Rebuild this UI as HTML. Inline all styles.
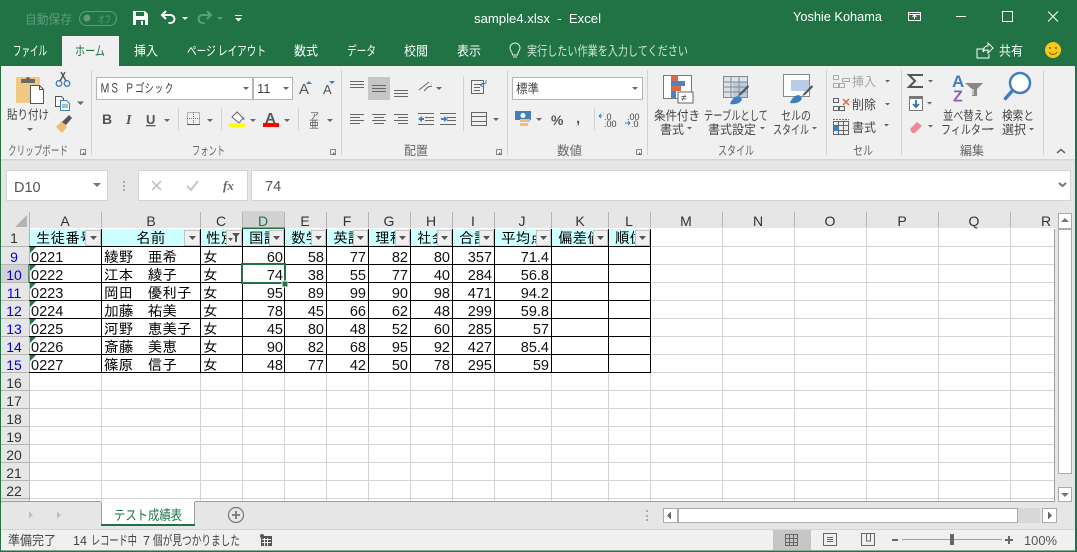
<!DOCTYPE html>
<html lang="ja"><head><meta charset="utf-8"><title>sample4.xlsx - Excel</title>
<style>
html,body{margin:0;padding:0;background:#e6e6e6;width:1077px;height:552px;overflow:hidden}
svg{display:block}
text{font-family:"Noto Sans CJK JP","Liberation Sans",sans-serif;font-size:12.5px;fill:#444}
.w text{fill:#fff}
.g text{font-family:"Liberation Sans","IPAGothic",sans-serif;font-size:14.5px;fill:#111}
.j text{font-family:"IPAGothic","Liberation Sans",sans-serif;font-size:14.6px;fill:#000}
.n text{text-anchor:end}
.h text{font-family:"Liberation Sans","IPAGothic",sans-serif;font-size:14px;fill:#333;text-anchor:middle}
.b text{fill:#0000e0}
.lb text{fill:#666;font-size:12.5px}
.t text{font-size:13px}
</style></head><body>
<svg width="1077" height="552" viewBox="0 0 1077 552" xmlns="http://www.w3.org/2000/svg">
<rect width="1077" height="552" fill="#e6e6e6"/>
<!-- title bar -->
<rect width="1077" height="66" fill="#217346"/>
<rect x="0" y="0" width="1" height="552" fill="#217346"/>
<rect x="1075" y="0" width="2" height="552" fill="#217346"/>
<text x="25" y="24" style="fill:#5f9c7d;font-size:13px" textLength="47" lengthAdjust="spacingAndGlyphs">自動保存</text>
<rect x="79.500" y="11.500" width="37" height="14" rx="7" fill="none" stroke="#5f9c7d"/>
<circle cx="87" cy="18" r="3.500" fill="#5f9c7d"/>
<text x="98" y="23" style="fill:#5f9c7d;font-size:10px" textLength="13" lengthAdjust="spacingAndGlyphs">オフ</text>
<path d="M133 11h12l3 3v11h-15z" fill="#fff"/><rect x="136" y="12" width="8" height="4" fill="#217346"/><rect x="136" y="20" width="9" height="5" fill="#217346"/><rect x="141" y="21" width="2" height="4" fill="#fff"/>
<path d="M166 11l-4 4 4 4M162.500 15h8a4 4 0 0 1 4 4 4 4 0 0 1-4 4h-2" fill="none" stroke="#fff" stroke-width="2"/>
<path d="M182 17h6l-3 3z" fill="#fff"/>
<path d="M207 11l4 4-4 4M210.500 15h-8a4 4 0 0 0-4 4 4 4 0 0 0 4 4h2" fill="none" stroke="#5f9c7d" stroke-width="2"/>
<path d="M217 17h6l-3 3z" fill="#5f9c7d"/>
<rect x="235" y="15" width="7" height="1" fill="#fff"/><path d="M235 18h7l-3.500 3.500z" fill="#fff"/>
<g class="w">
<text x="474" y="23" style="font-family:'Liberation Sans',sans-serif;font-size:13px;fill:#fff" textLength="127" lengthAdjust="spacingAndGlyphs" xml:space="preserve">sample4.xlsx  -  Excel</text>
<text x="793" y="21" style="font-family:'Liberation Sans',sans-serif;font-size:12.500px" textLength="89" lengthAdjust="spacingAndGlyphs">Yoshie Kohama</text>
</g>
<rect x="908.500" y="12.500" width="12" height="8" fill="none" stroke="#fff"/><path d="M908 14.500h13M914.500 19v-4M912.500 17l2-2 2 2" fill="none" stroke="#fff"/>
<rect x="956" y="16" width="10" height="1" fill="#fff"/>
<rect x="1002.500" y="11.500" width="10" height="10" fill="none" stroke="#fff"/>
<path d="M1048 11.500l10 10M1058 11.500l-10 10" stroke="#fff" fill="none" stroke-width="1"/>
<!-- tabs -->
<rect x="62" y="36" width="57" height="31" fill="#f0f0f0"/>
<g class="w t">
<text x="13" y="55.500" textLength="34" lengthAdjust="spacingAndGlyphs">ファイル</text>
<text x="134" y="55.500" textLength="24" lengthAdjust="spacingAndGlyphs">挿入</text>
<text x="187" y="55.500" textLength="79" lengthAdjust="spacingAndGlyphs">ページ レイアウト</text>
<text x="294" y="55.500" textLength="24" lengthAdjust="spacingAndGlyphs">数式</text>
<text x="347" y="55.500" textLength="29" lengthAdjust="spacingAndGlyphs">データ</text>
<text x="404" y="55.500" textLength="24" lengthAdjust="spacingAndGlyphs">校閲</text>
<text x="457" y="55.500" textLength="24" lengthAdjust="spacingAndGlyphs">表示</text>
<text x="999" y="55.500" textLength="24" lengthAdjust="spacingAndGlyphs">共有</text>
</g>
<text x="75" y="55.500" style="font-size:13px;fill:#217346" textLength="30" lengthAdjust="spacingAndGlyphs">ホーム</text>
<path d="M512.500 55c0-3-2.500-4-2.500-7a5 5 0 0 1 10 0c0 3-2.500 4-2.500 7zM513 57h4" fill="none" stroke="#dfeee5"/>
<text x="527" y="55.500" style="font-size:13px;fill:#d0e3d8" textLength="161" lengthAdjust="spacingAndGlyphs">実行したい作業を入力してください</text>
<path d="M985 49h-8v9h12v-4M983 52c0-4 2-6 5-6v-3l5 5-5 5v-3c-2 0-4 0-5 2z" fill="none" stroke="#fff"/>
<circle cx="1053" cy="50" r="8" fill="#fcc813"/><circle cx="1050" cy="48" r="1" fill="#7a5c00"/><circle cx="1056" cy="48" r="1" fill="#7a5c00"/><path d="M1049 52a4.500 4.500 0 0 0 8 0" fill="none" stroke="#7a5c00"/>
<!-- ribbon -->
<rect x="1" y="66" width="1074" height="93" fill="#f0f0f0"/>
<rect x="1" y="159" width="1074" height="1.500" fill="#d4d4d4"/>
<g fill="#d2d2d2">
<rect x="91" y="70" width="1" height="85"/><rect x="341" y="70" width="1" height="85"/><rect x="507" y="70" width="1" height="85"/><rect x="647" y="70" width="1" height="85"/><rect x="826" y="70" width="1" height="85"/><rect x="901" y="70" width="1" height="85"/><rect x="1043" y="70" width="1" height="85"/>
<rect x="178" y="108" width="1" height="22"/><rect x="221" y="108" width="1" height="22"/><rect x="298" y="108" width="1" height="22"/><rect x="463" y="76" width="1" height="55"/><rect x="594" y="108" width="1" height="22"/>
</g>
<!-- clipboard -->
<rect x="16" y="77" width="24" height="26" fill="#f0c985"/>
<path d="M21 79h5a2 2 0 0 1 4 0h5v4H21z" fill="#6a6a6a"/>
<path d="M30.500 85.500h9l4 4v14h-13z" fill="#fff" stroke="#555"/><path d="M39.500 85.500v4h4" fill="none" stroke="#555"/>
<g fill="none" stroke="#3f7fbf" stroke-width="1.300"><circle cx="59" cy="83.500" r="2.800"/><circle cx="67" cy="83.500" r="2.800"/></g>
<path d="M60 81l5-9M66 81l-5-9" stroke="#555" fill="none" stroke-width="1.400"/>
<path d="M55.500 96.500h6l2 2v8h-8z" fill="#fff" stroke="#555"/><path d="M60.500 100.500h6l3 3v7h-9z" fill="#fff" stroke="#3f7fbf"/><path d="M62 105h6M62 107h6" stroke="#3f7fbf"/>
<path d="M77 101.500h7l-3.500 3.500z" fill="#666"/>
<path d="M56 127l6-6 5 6-5 6z" fill="#eebd74"/><path d="M62 122l7-7 3 3-6 7z" fill="#555"/>
<text x="7" y="119" textLength="42" lengthAdjust="spacingAndGlyphs">貼り付け</text>
<path d="M27 128h6l-3 3z" fill="#666"/>
<g class="lb"><text x="8" y="155" textLength="60" lengthAdjust="spacingAndGlyphs">クリップボード</text>
<text x="192" y="155" textLength="33" lengthAdjust="spacingAndGlyphs">フォント</text>
<text x="404" y="155" textLength="24" lengthAdjust="spacingAndGlyphs">配置</text>
<text x="557" y="155" textLength="25" lengthAdjust="spacingAndGlyphs">数値</text>
<text x="718" y="155" textLength="36" lengthAdjust="spacingAndGlyphs">スタイル</text>
<text x="853" y="155" textLength="20" lengthAdjust="spacingAndGlyphs">セル</text>
<text x="960" y="155" textLength="24" lengthAdjust="spacingAndGlyphs">編集</text></g>
<g fill="none" stroke="#888"><path d="M80.500 149.500h5v5M80.500 149.500v5h5"/><path d="M330.500 149.500h5v5M330.500 149.500v5h5"/><path d="M496.500 149.500h5v5M496.500 149.500v5h5"/><path d="M636.500 149.500h5v5M636.500 149.500v5h5"/></g>
<path d="M83 152l3 3h-3zM333 152l3 3h-3zM499 152l3 3h-3zM639 152l3 3h-3z" fill="#666"/>
<path d="M1057 153l4-3.500 4 3.500" fill="none" stroke="#666" stroke-width="1.500"/>
<!-- font group -->
<rect x="96.500" y="77.500" width="156" height="22" fill="#fff" stroke="#b4b4b4"/>
<rect x="253.500" y="77.500" width="39" height="22" fill="#fff" stroke="#b4b4b4"/>
<text x="100" y="93" style="font-family:'IPAGothic',sans-serif;font-size:13px;fill:#444" textLength="74" lengthAdjust="spacingAndGlyphs">ＭＳ Ｐゴシック</text>
<text x="257" y="93" style="font-family:'Liberation Sans',sans-serif;font-size:13px;fill:#444">11</text>
<path d="M243 87h6l-3 3zM283 87h6l-3 3z" fill="#666"/>
<text x="299" y="94" style="font-family:'Liberation Sans',sans-serif;font-size:15px;fill:#555">A</text>
<path d="M306 84h6l-3-3z" fill="#3f7fbf"/>
<text x="323" y="94" style="font-family:'Liberation Sans',sans-serif;font-size:13px;fill:#555">A</text>
<path d="M329 81h6l-3 3z" fill="#3f7fbf"/>
<text x="102" y="124" style="font-family:'Liberation Sans',sans-serif;font-size:14px;font-weight:bold;fill:#555">B</text>
<text x="126" y="124" style="font-family:'Liberation Serif',serif;font-size:14px;font-style:italic;font-weight:bold;fill:#555">I</text>
<text x="146" y="124" style="font-family:'Liberation Sans',sans-serif;font-size:13px;font-weight:bold;fill:#555;text-decoration:underline">U</text>
<path d="M164 119h6l-3 3z M207 119h6l-3 3zM250 119h6l-3 3zM284 119h6l-3 3zM327 119h6l-3 3z" fill="#666"/>
<rect x="187.500" y="112.500" width="12" height="12" fill="none" stroke="#777" stroke-dasharray="1 1"/><path d="M193.500 112v13M187 118.500h13" stroke="#777" stroke-dasharray="1 1"/><rect x="187" y="124" width="13" height="1" fill="#555"/>
<path d="M232 117l5-5 6 6-4 5z" fill="#fff" stroke="#666"/><path d="M242 116l3 3-2 1z" fill="#3f7fbf"/>
<rect x="229" y="123" width="16" height="4" fill="#ffff00"/>
<text x="265" y="123" style="font-family:'Liberation Sans',sans-serif;font-size:15px;font-weight:bold;fill:#555">A</text>
<rect x="263" y="123" width="16" height="4" fill="#ff0000"/>
<text x="310" y="119" style="font-size:9px;fill:#555">ア</text><text x="309" y="128" style="font-size:10px;fill:#555">亜</text>
<!-- align -->
<rect x="368" y="77" width="22" height="23" fill="#c6c6c6"/>
<g stroke="#666" fill="none">
<path d="M350 81.500h14M350 84.500h14M350 87.500h14"/>
<path d="M372 85.500h14M372 88.500h14M372 91.500h14"/>
<path d="M394 90.500h14M394 93.500h14M394 96.500h14"/>
<path d="M350 114.500h14M350 117.500h10M350 120.500h14M350 123.500h10"/>
<path d="M372 114.500h14M374 117.500h10M372 120.500h14M374 123.500h10"/>
<path d="M394 114.500h14M398 117.500h10M394 120.500h14M398 123.500h10"/>
<path d="M418 113.500h16M425 117.500h9M425 120.500h9M418 124.500h16"/>
<path d="M440 113.500h16M447 117.500h9M447 120.500h9M440 124.500h16"/>
<path d="M419 90l10-8M424 91l4-4 4-1"/>
<rect x="471.500" y="80.500" width="12" height="13"/><path d="M474 84.500h8M474 87.500h6M474 90.500h6"/>
<rect x="471.500" y="112.500" width="15" height="13"/><path d="M471 116.500h16M471 121.500h16"/>
</g>
<path d="M418 119l4-3v2h2v2h-2v2zM448 119l-4-3v2h-3v2h3v2z" fill="#3f7fbf"/>
<path d="M480 85l6-2v-3M480 85l3-2M480 85l3 2" stroke="#3f7fbf" fill="none"/>
<path d="M436 87h6l-3 3zM493 118h6l-3 3z" fill="#666"/>
<!-- number -->
<rect x="512.500" y="77.500" width="130" height="22" fill="#fff" stroke="#b4b4b4"/>
<text x="516" y="93" textLength="23" lengthAdjust="spacingAndGlyphs">標準</text>
<path d="M632 87h6l-3 3z" fill="#666"/>
<rect x="515" y="111" width="16" height="9" fill="#3f7fbf"/><circle cx="523" cy="115.500" r="2.500" fill="#fff"/><rect x="520" y="119" width="10" height="3" fill="#eebd74"/><rect x="520" y="123" width="8" height="3" fill="#eebd74"/>
<path d="M536 118h6l-3 3z" fill="#666"/>
<text x="551" y="125" style="font-family:'Liberation Sans',sans-serif;font-size:14px;font-weight:bold;fill:#555">%</text>
<text x="576" y="123" style="font-family:'Liberation Sans',sans-serif;font-size:15px;font-weight:bold;fill:#555">,</text>
<text x="604" y="120" style="font-family:'Liberation Sans',sans-serif;font-size:9px">.0</text><text x="604" y="127" style="font-family:'Liberation Sans',sans-serif;font-size:9px">.00</text><path d="M602 116h-3M599 116l2-2M599 116l2 2" stroke="#3f7fbf" fill="none"/>
<text x="627" y="120" style="font-family:'Liberation Sans',sans-serif;font-size:9px">.00</text><text x="631" y="127" style="font-family:'Liberation Sans',sans-serif;font-size:9px">.0</text><path d="M625 123h5M630 123l-2-2M630 123l-2 2" stroke="#3f7fbf" fill="none"/>
<!-- style icons -->
<rect x="663.500" y="75.500" width="28" height="23" fill="#fff" stroke="#777"/>
<rect x="671" y="76" width="7" height="5" fill="#db6b45"/><rect x="671" y="81" width="14" height="5" fill="#4a84c4"/><rect x="671" y="86" width="10" height="5" fill="#db6b45"/><rect x="671" y="91" width="5" height="7" fill="#4a84c4"/>
<rect x="678" y="92" width="15" height="11" fill="#fff" stroke="#666"/><text x="681" y="101" style="font-family:'Liberation Sans',sans-serif;font-size:10px">≠</text>
<rect x="723.500" y="76.500" width="24" height="21" fill="#dde3ec" stroke="#888"/><rect x="733" y="82" width="14" height="15" fill="#b8cce4"/>
<path d="M723 82h24M723 87h24M723 92h24M731 77v20M739 77v20" stroke="#888" fill="none"/>
<path d="M748 85l-8 8-2 3 3-1 8-8z" fill="#555"/><path d="M730 104c2-6 6-8 9-8l3 3c-1 4-6 6-12 5z" fill="#3f7fbf"/>
<rect x="783.500" y="74.500" width="26" height="22" fill="#fff" stroke="#888"/><rect x="791" y="80" width="18" height="11" fill="#b8cce4"/>
<path d="M812 85l-8 8-2 3 3-1 8-8z" fill="#555"/><path d="M790 103c2-6 6-8 9-8l3 3c-1 4-6 6-12 5z" fill="#3f7fbf"/>
<text x="654" y="120" textLength="46" lengthAdjust="spacingAndGlyphs">条件付き</text>
<text x="660" y="134" textLength="24" lengthAdjust="spacingAndGlyphs">書式</text>
<text x="704" y="120" textLength="64" lengthAdjust="spacingAndGlyphs">テーブルとして</text>
<text x="708" y="134" textLength="48" lengthAdjust="spacingAndGlyphs">書式設定</text>
<text x="781" y="120" textLength="30" lengthAdjust="spacingAndGlyphs">セルの</text>
<text x="773" y="134" textLength="36" lengthAdjust="spacingAndGlyphs">スタイル</text>
<text x="852" y="86" style="fill:#a6a6a6" textLength="24" lengthAdjust="spacingAndGlyphs">挿入</text>
<text x="852" y="109" textLength="24" lengthAdjust="spacingAndGlyphs">削除</text>
<text x="852" y="132" textLength="24" lengthAdjust="spacingAndGlyphs">書式</text>
<text x="943" y="120" textLength="51" lengthAdjust="spacingAndGlyphs">並べ替えと</text>
<text x="941" y="134" textLength="50" lengthAdjust="spacingAndGlyphs">フィルター</text>
<text x="1002" y="120" textLength="32" lengthAdjust="spacingAndGlyphs">検索と</text>
<text x="1002" y="134" textLength="24" lengthAdjust="spacingAndGlyphs">選択</text>
<path d="M687 127h5l-2.500 2.500zM760 127h5l-2.500 2.500zM812 127h5l-2.500 2.500zM884 124h5l-2.500 2.500zM885 80h5l-2.500 2.500zM885 103h5l-2.500 2.500zM928 80h5l-2.500 2.500zM927 102h5l-2.500 2.500zM928 125h5l-2.500 2.500zM989 128h5l-2.500 2.500zM1029 128h5l-2.500 2.500z" fill="#666"/>
<g fill="none" stroke="#aaa"><rect x="833.500" y="75.500" width="5" height="4"/><rect x="833.500" y="83.500" width="5" height="4"/><rect x="839.500" y="83.500" width="5" height="4"/><rect x="842.500" y="78.500" width="7" height="3"/></g>
<g fill="none" stroke="#666"><rect x="833.500" y="98.500" width="5" height="4"/><rect x="833.500" y="106.500" width="5" height="4"/><rect x="839.500" y="106.500" width="5" height="4"/><rect x="833.500" y="121.500" width="15" height="13"/><path d="M833 125.500h16M838.500 122v13M843.500 122v13M833 130.500h16"/></g>
<path d="M843 99l6 6M849 99l-6 6" stroke="#db6b45" stroke-width="1.500"/>
<rect x="834" y="126" width="5" height="5" fill="#3f7fbf"/><path d="M833 119.500h16" stroke="#3f7fbf" stroke-dasharray="2 1"/>
<!-- editing -->
<path d="M923 75h-14l6 6-6 6h14" fill="none" stroke="#555" stroke-width="2"/>
<rect x="909.500" y="96.500" width="13" height="14" fill="#fff" stroke="#777"/><rect x="909" y="96" width="14" height="3" fill="#777"/><path d="M916 100v7M913 104l3 3 3-3" stroke="#2f6fb0" stroke-width="1.800" fill="none"/>
<path d="M910 129l7-7 5 4-7 7h-3z" fill="#ee8a9a"/>
<text x="952" y="87" style="font-family:'Liberation Sans',sans-serif;font-size:17px;font-weight:bold;fill:#3f7fbf">A</text>
<text x="953" y="101.500" style="font-family:'Liberation Sans',sans-serif;font-size:16px;font-weight:bold;fill:#8b5fb5">Z</text>
<path d="M965 83h18l-6 6v7h-5v-7z" fill="#888"/><path d="M973 89v6" stroke="#fff"/>
<circle cx="1020" cy="83" r="10" fill="#fff" stroke="#3f7fbf" stroke-width="2.500"/><path d="M1012.500 90.500l-7 8" stroke="#3f7fbf" stroke-width="3.500" stroke-linecap="round"/>
<!-- formula bar -->
<rect x="6.500" y="170.500" width="101" height="30" fill="#fff" stroke="#d4d4d4"/>
<text x="14" y="192" style="font-family:'Liberation Sans',sans-serif;font-size:14.500px;fill:#555">D10</text>
<path d="M93 183h8l-4 4z" fill="#777"/>
<path d="M123 181h2v2h-2zM123 185h2v2h-2zM123 189h2v2h-2z" fill="#aaa"/>
<rect x="138.500" y="170.500" width="109" height="30" fill="#fff" stroke="#d4d4d4"/>
<rect x="251.500" y="170.500" width="819" height="30" fill="#fff" stroke="#d4d4d4"/>
<path d="M152 181l9 9M161 181l-9 9" stroke="#c8c8c8" stroke-width="1.800"/>
<path d="M187 186l4 4 7-9" stroke="#c8c8c8" stroke-width="2" fill="none"/>
<text x="223" y="190" style="font-family:'Liberation Serif',serif;font-style:italic;font-weight:bold;font-size:13px;fill:#666">fx</text>
<text x="265" y="191" style="font-family:'Liberation Sans',sans-serif;font-size:14.500px;fill:#555">74</text>
<path d="M1059 183l3.500 3 3.500-3" stroke="#777" stroke-width="2" fill="none"/>
<!-- header band -->
<rect x="1" y="211" width="1054" height="18" fill="#e6e6e6"/>
<rect x="1" y="229" width="28" height="272" fill="#e6e6e6"/>
<rect x="29" y="228" width="1026" height="273" fill="#fff"/>
<!-- selected headers -->
<rect x="242" y="211" width="42" height="17" fill="#d2d2d2"/>
<rect x="1" y="264" width="28" height="18" fill="#d2d2d2"/>
<path d="M15 227h12v-12z" fill="#b4b4b4"/>
<!-- header separators -->
<g fill="#b4b4b4">
<rect x="29" y="212" width="1" height="16"/><rect x="101" y="212" width="1" height="16"/><rect x="200" y="212" width="1" height="16"/><rect x="242" y="212" width="1" height="16"/><rect x="284" y="212" width="1" height="16"/><rect x="326" y="212" width="1" height="16"/><rect x="368" y="212" width="1" height="16"/><rect x="410" y="212" width="1" height="16"/><rect x="452" y="212" width="1" height="16"/><rect x="494" y="212" width="1" height="16"/><rect x="551" y="212" width="1" height="16"/><rect x="608" y="212" width="1" height="16"/><rect x="650" y="212" width="1" height="16"/><rect x="722" y="212" width="1" height="16"/><rect x="794" y="212" width="1" height="16"/><rect x="866" y="212" width="1" height="16"/><rect x="938" y="212" width="1" height="16"/><rect x="1010" y="212" width="1" height="16"/>
<rect x="1" y="246" width="28" height="1"/><rect x="1" y="264" width="28" height="1"/><rect x="1" y="282" width="28" height="1"/><rect x="1" y="300" width="28" height="1"/><rect x="1" y="318" width="28" height="1"/><rect x="1" y="336" width="28" height="1"/><rect x="1" y="354" width="28" height="1"/><rect x="1" y="372" width="28" height="1"/><rect x="1" y="390" width="28" height="1"/><rect x="1" y="408" width="28" height="1"/><rect x="1" y="426" width="28" height="1"/><rect x="1" y="444" width="28" height="1"/><rect x="1" y="462" width="28" height="1"/><rect x="1" y="480" width="28" height="1"/><rect x="1" y="498" width="28" height="1"/>
<rect x="29" y="228" width="1" height="273"/>
</g>
<!-- gridlines -->
<g fill="#d4d4d4">
<rect x="30" y="390" width="1025" height="1"/><rect x="30" y="408" width="1025" height="1"/><rect x="30" y="426" width="1025" height="1"/><rect x="30" y="444" width="1025" height="1"/><rect x="30" y="462" width="1025" height="1"/><rect x="30" y="480" width="1025" height="1"/><rect x="30" y="498" width="1025" height="1"/>
<rect x="651" y="246" width="404" height="1"/><rect x="651" y="264" width="404" height="1"/><rect x="651" y="282" width="404" height="1"/><rect x="651" y="300" width="404" height="1"/><rect x="651" y="318" width="404" height="1"/><rect x="651" y="336" width="404" height="1"/><rect x="651" y="354" width="404" height="1"/><rect x="651" y="372" width="404" height="1"/>
<rect x="101" y="373" width="1" height="128"/><rect x="200" y="373" width="1" height="128"/><rect x="242" y="373" width="1" height="128"/><rect x="284" y="373" width="1" height="128"/><rect x="326" y="373" width="1" height="128"/><rect x="368" y="373" width="1" height="128"/><rect x="410" y="373" width="1" height="128"/><rect x="452" y="373" width="1" height="128"/><rect x="494" y="373" width="1" height="128"/><rect x="551" y="373" width="1" height="128"/><rect x="608" y="373" width="1" height="128"/><rect x="650" y="373" width="1" height="128"/>
<rect x="722" y="229" width="1" height="272"/><rect x="794" y="229" width="1" height="272"/><rect x="866" y="229" width="1" height="272"/><rect x="938" y="229" width="1" height="272"/><rect x="1010" y="229" width="1" height="272"/>
</g>
<!-- cyan header row -->
<rect x="30" y="229" width="621" height="17" fill="#ccffff"/>
<!-- table lines -->
<g fill="#000">
<rect x="29" y="246" width="622" height="1"/><rect x="29" y="264" width="622" height="1"/><rect x="29" y="282" width="622" height="1"/><rect x="29" y="300" width="622" height="1"/><rect x="29" y="318" width="622" height="1"/><rect x="29" y="336" width="622" height="1"/><rect x="29" y="354" width="622" height="1"/><rect x="29" y="372" width="622" height="1"/>
<rect x="101" y="229" width="1" height="144"/><rect x="200" y="229" width="1" height="144"/><rect x="242" y="229" width="1" height="144"/><rect x="284" y="229" width="1" height="144"/><rect x="326" y="229" width="1" height="144"/><rect x="368" y="229" width="1" height="144"/><rect x="410" y="229" width="1" height="144"/><rect x="452" y="229" width="1" height="144"/><rect x="494" y="229" width="1" height="144"/><rect x="551" y="229" width="1" height="144"/><rect x="608" y="229" width="1" height="144"/><rect x="650" y="229" width="1" height="144"/>
</g>
<!-- column letters -->
<g class="h">
<text x="65" y="226">A</text><text x="151" y="226">B</text><text x="221" y="226">C</text><text x="263" y="226" style="fill:#217346">D</text><text x="305" y="226">E</text><text x="347" y="226">F</text><text x="389" y="226">G</text><text x="431" y="226">H</text><text x="473" y="226">I</text><text x="522" y="226">J</text><text x="580" y="226">K</text><text x="629" y="226">L</text><text x="686" y="226">M</text><text x="758" y="226">N</text><text x="830" y="226">O</text><text x="902" y="226">P</text><text x="974" y="226">Q</text><text x="1046" y="226">R</text>
<text x="14" y="243">1</text><text x="14" y="388">16</text><text x="14" y="406">17</text><text x="14" y="424">18</text><text x="14" y="442">19</text><text x="14" y="460">20</text><text x="14" y="478">21</text><text x="14" y="496">22</text>
</g>
<g class="h b">
<text x="14" y="262">9</text><text x="14" y="280">10</text><text x="14" y="298">11</text><text x="14" y="316">12</text><text x="14" y="334">13</text><text x="14" y="352">14</text><text x="14" y="370">15</text>
</g>
<!-- header text -->
<g class="j">
<text x="36" y="243">生徒番号</text><text x="136" y="243">名前</text><text x="206" y="243">性別</text><text x="249" y="243">国語</text><text x="291" y="243">数学</text><text x="333" y="243">英語</text><text x="375" y="243">理科</text><text x="417" y="243">社会</text><text x="459" y="243">合計</text><text x="501" y="243">平均点</text><text x="558" y="243">偏差値</text><text x="615" y="243">順位</text>
</g>
<!-- filter buttons -->
<g fill="#f0f0f0" stroke="#c4c4c4">
<rect x="85.500" y="230.500" width="15" height="15"/><rect x="184.500" y="230.500" width="15" height="15"/><rect x="226.500" y="230.500" width="15" height="15"/><rect x="269.500" y="230.500" width="14" height="15"/><rect x="311.500" y="230.500" width="14" height="15"/><rect x="353.500" y="230.500" width="14" height="15"/><rect x="395.500" y="230.500" width="14" height="15"/><rect x="437.500" y="230.500" width="14" height="15"/><rect x="479.500" y="230.500" width="14" height="15"/><rect x="536.500" y="230.500" width="14" height="15"/><rect x="593.500" y="230.500" width="14" height="15"/><rect x="635.500" y="230.500" width="14" height="15"/>
</g>
<path d="M90 236h7l-3.500 4zM189 236h7l-3.500 4zM273 236h7l-3.500 4zM315 236h7l-3.500 4zM357 236h7l-3.500 4zM399 236h7l-3.500 4zM441 236h7l-3.500 4zM483 236h7l-3.500 4zM540 236h7l-3.500 4zM597 236h7l-3.500 4zM639 236h7l-3.500 4z" fill="#555"/>
<path d="M228 238h5l-2.500 3zM232 233h8l-3 3.500v5l-2 1v-6z" fill="#555"/>
<!-- data -->
<g class="g">
<text x="31" y="262">0221</text><text x="31" y="280">0222</text><text x="31" y="298">0223</text><text x="31" y="316">0224</text><text x="31" y="334">0225</text><text x="31" y="352">0226</text><text x="31" y="370">0227</text>
</g>
<g class="j">
<text x="104" y="262">綾野　亜希</text><text x="104" y="280">江本　綾子</text><text x="104" y="298">岡田　優利子</text><text x="104" y="316">加藤　祐美</text><text x="104" y="334">河野　恵美子</text><text x="104" y="352">斎藤　美恵</text><text x="104" y="370">篠原　信子</text>
<text x="203" y="262">女</text><text x="203" y="280">女</text><text x="203" y="298">女</text><text x="203" y="316">女</text><text x="203" y="334">女</text><text x="203" y="352">女</text><text x="203" y="370">女</text>
</g>
<g class="g n">
<text x="283" y="262">60</text><text x="324" y="262">58</text><text x="366" y="262">77</text><text x="408" y="262">82</text><text x="450" y="262">80</text><text x="492" y="262">357</text><text x="549" y="262">71.4</text>
<text x="283" y="280">74</text><text x="324" y="280">38</text><text x="366" y="280">55</text><text x="408" y="280">77</text><text x="450" y="280">40</text><text x="492" y="280">284</text><text x="549" y="280">56.8</text>
<text x="283" y="298">95</text><text x="324" y="298">89</text><text x="366" y="298">99</text><text x="408" y="298">90</text><text x="450" y="298">98</text><text x="492" y="298">471</text><text x="549" y="298">94.2</text>
<text x="283" y="316">78</text><text x="324" y="316">45</text><text x="366" y="316">66</text><text x="408" y="316">62</text><text x="450" y="316">48</text><text x="492" y="316">299</text><text x="549" y="316">59.8</text>
<text x="283" y="334">45</text><text x="324" y="334">80</text><text x="366" y="334">48</text><text x="408" y="334">52</text><text x="450" y="334">60</text><text x="492" y="334">285</text><text x="549" y="334">57</text>
<text x="283" y="352">90</text><text x="324" y="352">82</text><text x="366" y="352">68</text><text x="408" y="352">95</text><text x="450" y="352">92</text><text x="492" y="352">427</text><text x="549" y="352">85.4</text>
<text x="283" y="370">48</text><text x="324" y="370">77</text><text x="366" y="370">42</text><text x="408" y="370">50</text><text x="450" y="370">78</text><text x="492" y="370">295</text><text x="549" y="370">59</text>
</g>
<path d="M30 247h6l-6 6zM30 265h6l-6 6zM30 283h6l-6 6zM30 301h6l-6 6zM30 319h6l-6 6zM30 337h6l-6 6zM30 355h6l-6 6z" fill="#217346"/>
<!-- selection -->
<rect x="242" y="227.500" width="43" height="1.500" fill="#217346"/>
<rect x="28" y="264" width="1.500" height="18" fill="#217346" opacity=".7"/>
<rect x="242" y="264" width="43" height="19" fill="none" stroke="#217346" stroke-width="2"/>
<rect x="282" y="281" width="6" height="6" fill="#217346" stroke="#fff"/>
<!-- grid edge -->
<rect x="1054" y="229" width="1" height="272" fill="#a0a0a0"/>
<rect x="1" y="501" width="1054" height="1" fill="#9e9e9e"/>
<!-- v scrollbar -->
<rect x="1055" y="211" width="20" height="318" fill="#e6e6e6"/>
<rect x="1058.500" y="213.500" width="13" height="15" fill="#fff" stroke="#ababab"/>
<path d="M1061 222h8l-4-4z" fill="#777"/>
<rect x="1058.500" y="229.500" width="13" height="244" fill="#fff" stroke="#ababab"/>
<rect x="1058.500" y="487.500" width="13" height="14" fill="#fff" stroke="#ababab"/>
<path d="M1061 493h8l-4 4z" fill="#777"/>
<!-- sheet tabs -->
<rect x="101" y="501" width="94" height="25" fill="#fff"/>
<path d="M101.500 502v23M194.500 502v23" stroke="#9e9e9e" fill="none"/>
<rect x="101" y="524" width="94" height="2" fill="#217346"/>
<text x="114" y="520" style="font-size:13.500px;fill:#217346" textLength="68" lengthAdjust="spacingAndGlyphs">テスト成績表</text>
<path d="M33 515l-4-3.500v7zM57 511.500v7l4-3.500z" fill="#bdbdbd"/>
<circle cx="236" cy="515" r="7.500" fill="none" stroke="#777" stroke-width="1.200"/>
<path d="M232 515h8M236 511v8" stroke="#777" stroke-width="1.800"/>
<!-- h scrollbar -->
<path d="M646 510h2v2h-2zM646 515h2v2h-2zM646 519h2v2h-2z" fill="#aaa"/>
<rect x="663.500" y="508.500" width="14" height="14" fill="#fff" stroke="#ababab"/>
<path d="M667 515.500l4-4v8z" fill="#666"/>
<rect x="1018" y="508" width="22" height="15" fill="#d8d8d8"/>
<rect x="678.500" y="508.500" width="339" height="14" fill="#fff" stroke="#ababab"/>
<rect x="1042.500" y="508.500" width="14" height="14" fill="#fff" stroke="#ababab"/>
<path d="M1052 515.500l-4-4v8z" fill="#666"/>
<!-- status bar -->
<rect x="1" y="529" width="1074" height="21" fill="#f0f0f0"/>
<rect x="1" y="529" width="1074" height="1" fill="#d4d4d4"/>
<rect x="0" y="550.500" width="1077" height="1.500" fill="#217346"/>
<g style="font-size:13px">
<text x="8" y="545" style="font-size:13px" textLength="48" lengthAdjust="spacingAndGlyphs">準備完了</text>
<text x="73" y="545" style="font-family:'Liberation Sans',sans-serif;font-size:12.500px">14</text>
<text x="91" y="545" style="font-size:13px" textLength="46" lengthAdjust="spacingAndGlyphs">レコード中</text>
<text x="143" y="545" style="font-family:'Liberation Sans',sans-serif;font-size:12.500px">7</text>
<text x="153" y="545" style="font-size:13px" textLength="87" lengthAdjust="spacingAndGlyphs">個が見つかりました</text>
</g>
<rect x="261" y="536" width="11" height="10" fill="#555"/><circle cx="262" cy="536" r="2" fill="#555"/>
<path d="M262 539.500h9M262 542.500h9M264.500 538v8M267.500 538v8" stroke="#f0f0f0"/>
<rect x="773" y="530" width="38" height="20" fill="#c6c6c6"/>
<g fill="none" stroke="#666">
<rect x="785.500" y="534.500" width="12" height="11"/><path d="M785 538.500h13M785 542.500h13M789.500 534v12M793.500 534v12"/>
<rect x="823.500" y="533.500" width="13" height="12"/><path d="M827 537.500h6M827 539.500h6M827 541.500h6"/>
<path d="M861.500 545.500v-12h13v12zM866.500 534v7h4v-7"/>
</g>
<rect x="892" y="539" width="6" height="2" fill="#666"/>
<rect x="902" y="539" width="100" height="1" fill="#a0a0a0"/>
<rect x="950" y="534" width="4" height="11" fill="#666"/>
<path d="M1005 540h8M1009 536v8" stroke="#666" stroke-width="2"/>
<text x="1024" y="545" style="font-family:'Liberation Sans',sans-serif;font-size:13px;fill:#555" textLength="33" lengthAdjust="spacingAndGlyphs">100%</text>
</svg>
</body></html>
